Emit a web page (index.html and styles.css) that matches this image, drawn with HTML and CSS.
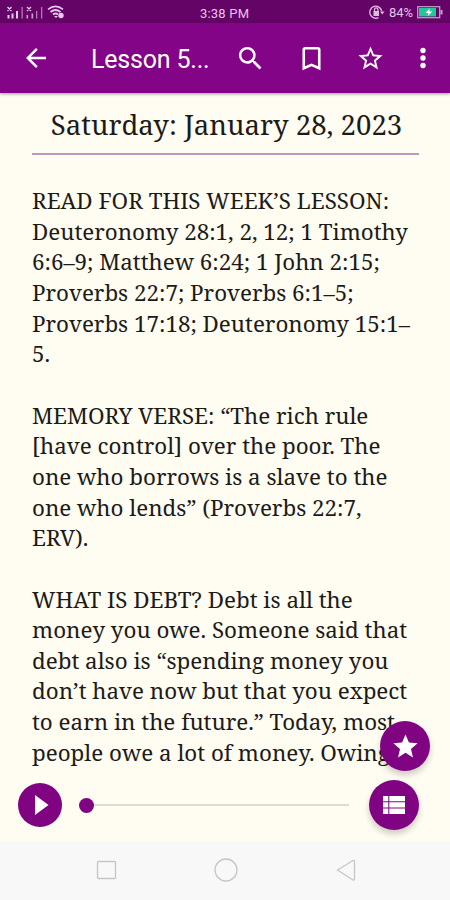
FILE: index.html
```html
<!DOCTYPE html>
<html lang="en">

<head>
    <meta charset="UTF-8">
    <meta name="viewport" content="width=device-width, initial-scale=1.0">
    <title>Lesson 5</title>
    <link rel="stylesheet" href="styles.css">
</head>

<body>
    <div class="status-bar">
        <svg class="signals" width="47" height="16" viewBox="0 0 47 16" fill="#e6c9e8">
            <path d="M7.500 11h2v3.500h-2zM11.500 9.500h2v5h-2zM16 7h2v7.500h-2z" />
            <path d="M21.500 3h1.300v11.500h-1.300zM36 7h1.300v7.500H36zM41 3h1.300v11.500H41z" opacity=".6" />
            <path d="M26.500 11h1.600v3.500h-1.600zM31.500 9.500h1.600v5h-1.600z" opacity=".8" />
            <path d="M7.500 3l4 4m0-4l-4 4M27 3l4 4m0-4l-4 4" stroke="#e6c9e8" stroke-width="1.300" />
        </svg>
        <svg class="wifi" width="18" height="14" viewBox="0 0 18 14" fill="none" stroke="#e6c9e8" stroke-width="1.700">
            <path d="M1 4.300Q8.500-1.700 16 4.300M3.500 7Q8.500 3 13.500 7M6 9.500q2.500-2 5 0" />
            <path d="M7 11l2 2 2-2z" fill="#e6c9e8" stroke="none" />
            <circle cx="14" cy="10.500" r="2.700" fill="#e6c9e8" stroke="none" />
        </svg>
        <span class="clock">3:38 PM</span>
        <svg class="rotation" width="17" height="14" viewBox="0 0 17 14" fill="none" stroke="#ddbce0" stroke-width="1.300">
            <path d="M9.500 12.600A6 6 0 1 1 12.700 6M5.500 6V4.500a1.700 1.700 0 0 1 3.400 0V6" />
            <path d="M4.500 6h5.500v5H4.500zM11 6.500h4.500L13.200 9.500z" fill="#ddbce0" stroke="none" />
        </svg>
        <span class="level">84%</span>
        <svg class="battery" width="26" height="13" viewBox="0 0 26 13">
            <rect x=".7" y=".7" width="22" height="11" fill="none" stroke="#c9a0cd" stroke-width="1.200" />
            <path d="M23.500 4h2v4.500h-2z" fill="#c9a0cd" />
            <path d="M2 2h17v8.500H2z" fill="#20c997" />
            <path d="M12.500 2.500L8.500 7h3l-1 3.200 5-4.700h-3z" fill="#fff" />
        </svg>
    </div>

    <header class="app-bar">
        <svg class="back" width="30" height="30" viewBox="0 0 24 24" fill="#fff">
            <path d="M20 11H7.830l5.590-5.590L12 4l-8 8 8 8 1.410-1.410L7.830 13H20v-2z" />
        </svg>
        <h1>Lesson 5...</h1>
        <svg class="action" width="31" height="31" viewBox="0 0 24 24" fill="#fff">
            <path d="M15.500 14h-.79l-.28-.27A6.471 6.471 0 0 0 16 9.500 6.500 6.500 0 1 0 9.500 16c1.610 0 3.090-.59 4.230-1.570l.27.28v.79l5 4.990L20.490 19l-4.990-5zm-6 0C7.010 14 5 11.990 5 9.500S7.010 5 9.500 5 14 7.010 14 9.500 11.990 14 9.500 14z" />
        </svg>
        <svg class="action" width="31" height="31" viewBox="0 0 24 24" fill="#fff">
            <path d="M17 3H7c-1.100 0-2 .9-2 2v16l7-3 7 3V5c0-1.100-.9-2-2-2zm0 15l-5-2.180L7 18V5h10v13z" />
        </svg>
        <svg class="action" width="29" height="29" viewBox="0 0 24 24" fill="#fff">
            <path d="M22 9.240l-7.190-.62L12 2 9.190 8.630 2 9.240l5.460 4.730L5.820 21 12 17.270 18.180 21l-1.630-7.030L22 9.240zM12 15.400l-3.760 2.270 1-4.280-3.320-2.880 4.380-.38L12 6.100l1.710 4.040 4.380.38-3.320 2.880 1 4.280L12 15.400z" />
        </svg>
        <svg class="more" width="10" height="24" viewBox="0 0 10 24" fill="#fff">
            <circle cx="5" cy="4.500" r="2.700" />
            <circle cx="5" cy="12" r="2.700" />
            <circle cx="5" cy="19.500" r="2.700" />
        </svg>
    </header>

    <main class="lesson">
        <h2>Saturday: January 28, 2023</h2>
        <p>READ FOR THIS WEEK’S LESSON:<br>
            Deuteronomy 28:1, 2, 12; 1 Timothy<br>
            6:6–9; Matthew 6:24; 1 John 2:15;<br>
            Proverbs 22:7; Proverbs 6:1–5;<br>
            Proverbs 17:18; Deuteronomy 15:1–<br>
            5.</p>
        <p>MEMORY VERSE: “The rich rule<br>
            [have control] over the poor. The<br>
            one who borrows is a slave to the<br>
            one who lends” (Proverbs 22:7,<br>
            ERV).</p>
        <p>WHAT IS DEBT? Debt is all the<br>
            money you owe. Someone said that<br>
            debt also is “spending money you<br>
            don’t have now but that you expect<br>
            to earn in the future.” Today, most<br>
            people owe a lot of money. Owing</p>
    </main>

    <div class="fab fab-star">
        <svg width="29" height="29" viewBox="0 0 24 24" fill="#fff">
            <path d="M12 17.270L18.180 21l-1.640-7.030L22 9.240l-7.190-.61L12 2 9.190 8.630 2 9.240l5.460 4.730L5.820 21z" />
        </svg>
    </div>

    <div class="player">
        <div class="play">
            <svg width="14" height="20" viewBox="0 0 14 20" fill="#fff">
                <path d="M0 0l13.500 10L0 20z" />
            </svg>
        </div>
        <div class="seek">
            <div class="thumb"></div>
            <div class="track"></div>
        </div>
        <div class="fab">
            <svg width="22" height="18" viewBox="0 0 22 18" fill="#fff">
                <path d="M0 0h5.300v5.300H0zM6.300 0H22v5.300H6.300zM0 6.300h5.300v5.300H0zM6.300 6.300H22v5.300H6.300zM0 12.600h5.300V18H0zM6.300 12.600H22V18H6.300z" />
            </svg>
        </div>
    </div>

    <nav class="nav-bar">
        <svg width="24" height="24" viewBox="0 0 24 24">
            <rect x="3.500" y="3.500" width="18" height="17" rx="1" />
        </svg>
        <svg width="24" height="24" viewBox="0 0 24 24">
            <circle cx="12" cy="12" r="11" />
        </svg>
        <svg width="24" height="24" viewBox="0 0 24 24">
            <path d="M3.500 12L19 2.500q1.500-.5 1.500 1v17.500q0 1.500-1.500 1z" />
        </svg>
    </nav>
</body>

</html>
```
FILE: styles.css
```css
* {
    box-sizing: border-box;
}

body {
    display: flex;
    flex-direction: column;
    position: relative;
    width: 450px;
    height: 900px;
    margin: 0;
    overflow: hidden;
    background-color: #fffdf1;
    font-family: Roboto, sans-serif;
}

svg {
    display: block;
    flex: none;
}

.status-bar {
    display: flex;
    align-items: center;
    height: 23px;
    flex: none;
    padding-top: 1px;
    background-color: #650467;
    color: #e3c6e5;
    font-size: 13px;
}

.clock {
    width: 54px;
    margin: 2px 0 0 135px;
    letter-spacing: 0.2px;
    white-space: nowrap;
}

.rotation {
    margin-left: 115px;
}

.level {
    width: 27px;
    margin: 0 1px 0 3px;
}

.app-bar {
    display: flex;
    align-items: center;
    height: 70px;
    flex: none;
    padding-left: 21px;
    background-color: #830487;
    box-shadow: 0 1px 3px rgba(0, 0, 0, 0.4);
    color: #fff;
}

.app-bar h1 {
    width: 118px;
    margin: 3px 26px 0 40px;
    font-size: 25px;
    font-weight: 400;
    letter-spacing: -0.2px;
    white-space: nowrap;
}

.action {
    margin-right: 29.5px;
}

.more {
    margin-left: 3px;
}

.lesson {
    flex: 1;
    padding: 12px 31px 0 32px;
    overflow: hidden;
    color: #1c1b19;
    font-family: "Noto Serif", "DejaVu Serif", serif;
    font-size: 22.36px;
    line-height: 30.65px;
}

.lesson h2 {
    height: 50px;
    margin: 0 0 31px;
    padding-left: 2px;
    border-bottom: 2px solid #b79bc6;
    font-size: 27.55px;
    font-weight: 400;
    line-height: 40px;
    text-align: center;
    white-space: nowrap;
}

.lesson p {
    margin: 0 0 30.65px;
    white-space: nowrap;
}

.fab,
.play {
    display: flex;
    align-items: center;
    justify-content: center;
    width: 50px;
    height: 50px;
    flex: none;
    border-radius: 50%;
    background-color: #800482;
}

.fab {
    box-shadow: 0 4px 6px rgba(0, 0, 0, 0.2);
}

/* floats over the lesson text */
.fab-star {
    position: absolute;
    right: 20px;
    bottom: 129px;
}

.player {
    display: flex;
    align-items: center;
    height: 71px;
    flex: none;
    padding: 0 31px 1px 18px;
}

.play {
    width: 44px;
    height: 44px;
    padding-left: 3px;
}

.seek {
    display: flex;
    align-items: center;
    flex: 1;
    margin: 0 20px 0 17px;
}

.thumb {
    width: 15px;
    height: 15px;
    border-radius: 50%;
    background-color: #800482;
}

.track {
    flex: 1;
    height: 2px;
    background-color: #dedbd0;
}

.nav-bar {
    display: flex;
    justify-content: center;
    gap: 96px;
    height: 59px;
    flex: none;
    padding: 17px 0 0 1px;
    background-color: #f8f8f8;
    fill: none;
    stroke: #c6c6c6;
    stroke-width: 1.3;
}
```
